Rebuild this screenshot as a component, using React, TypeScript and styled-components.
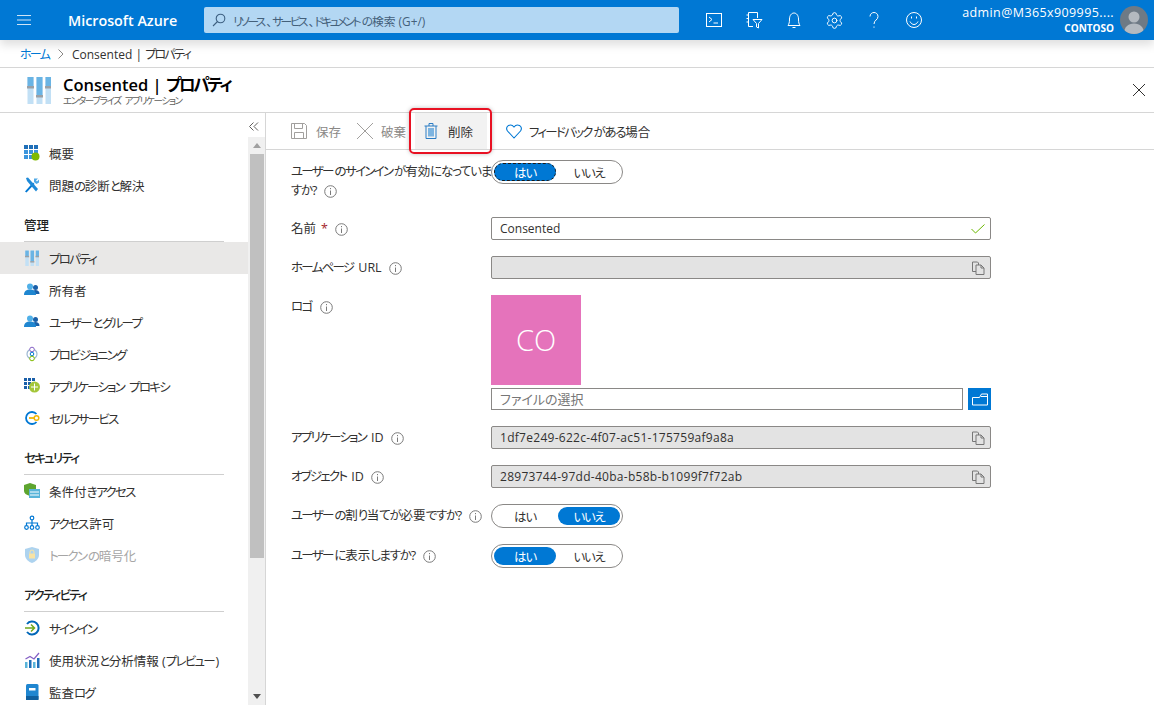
import React from "react";
import styled, { createGlobalStyle } from "styled-components";
import { Settings } from "lucide-react";

const GlobalStyle = createGlobalStyle`
  html, body {
    margin: 0;
    padding: 0;
    background: #fff;
  }
  body {
    font-family: "Open Sans", "Noto Sans CJK JP", sans-serif;
    font-feature-settings: "palt";
    font-size: 12px;
    color: #323130;
  }
  * { box-sizing: border-box; }
`;

const Page = styled.div`
  width: 1154px;
  height: 705px;
  overflow: hidden;
  display: flex;
  flex-direction: column;
`;

// the kana of the original UI font are much narrower than the kanji
const Katakana = styled.span`
  letter-spacing: -0.14em;
  margin-right: 0.14em;
`;

const Hiragana = styled.span`
  letter-spacing: -0.1em;
`;

const Ja = ({ text }: { text: string }) => (
  <>
    {text.split(/([ァ-ヶー]+|[ぁ-ん]+)/).map((part, i) => {
      if (/^[ァ-ヶー]+$/.test(part)) return <Katakana key={i}>{part}</Katakana>;
      if (/^[ぁ-ん]+$/.test(part)) return <Hiragana key={i}>{part}</Hiragana>;
      return part;
    })}
  </>
);

/* top bar */
const TopBar = styled.header`
  height: 40px;
  flex: none;
  background: #0078d4;
  display: flex;
  align-items: center;
  color: #fff;
  position: relative;
  z-index: 2;
  box-shadow: 0 5px 9px rgba(0, 0, 0, 0.13);
`;

const Burger = styled.div`
  width: 68px;
  padding-left: 17px;
  display: flex;
  align-items: center;
`;

const Brand = styled.div`
  width: 136px;
  font-size: 14.3px;
  font-weight: 600;
`;

const Search = styled.div`
  width: 475px;
  height: 26px;
  background: #b3d7f3;
  border-radius: 2px;
  display: flex;
  align-items: center;
  gap: 7px;
  padding-left: 8px;
  font-size: 11.8px;
  color: #44607a;
  white-space: pre;
  ${Katakana} {
    letter-spacing: -0.22em;
    margin-right: 0.22em;
  }
`;

const TopIcons = styled.div`
  display: flex;
  margin-left: 15px;
`;

const TopIcon = styled.div`
  width: 40px;
  height: 40px;
  display: flex;
  align-items: center;
  justify-content: center;
`;

const Account = styled.div`
  margin-left: auto;
  display: flex;
  align-items: center;
  padding-right: 6px;
  gap: 6px;
`;

const AccountText = styled.div`
  text-align: right;
  line-height: 16px;
  font-size: 12.5px;
  letter-spacing: 0.4px;
`;

const Tenant = styled.div`
  font-size: 10px;
  font-weight: 700;
  line-height: 14px;
  letter-spacing: 0;
`;

const Avatar = styled.div`
  width: 28px;
  height: 28px;
  border-radius: 50%;
  background: #6e7a85;
  overflow: hidden;
`;

/* breadcrumb and title */
const Crumbs = styled.nav`
  height: 28px;
  flex: none;
  border-bottom: 1px solid #d6d6d6;
  display: flex;
  align-items: center;
  padding: 1px 0 0 20px;
  font-size: 12px;
  white-space: pre;
`;

const CrumbLink = styled.span`
  color: #0078d4;
`;

const CrumbSep = styled.span`
  display: flex;
  width: 21px;
  justify-content: center;
`;

const TitleBar = styled.div`
  height: 45px;
  flex: none;
  border-bottom: 1px solid #d6d6d6;
  display: flex;
  align-items: center;
  padding: 0 9px 0 27px;
`;

const TitleText = styled.div`
  margin-left: 12px;
  flex: 1;
`;

const Heading = styled.h1`
  margin: 0;
  font-size: 16.5px;
  font-weight: 600;
  line-height: 21px;
  color: #000;
`;

const SubHeading = styled.div`
  font-size: 9.5px;
  line-height: 12px;
  color: #605e5c;
`;

/* body */
const Body = styled.div`
  flex: 1;
  min-height: 0;
  display: flex;
`;

const Nav = styled.aside`
  width: 248px;
  flex: none;
  padding-top: 24px;
  overflow: hidden;
`;

const NavItem = styled.div<{ $active?: boolean; $disabled?: boolean }>`
  height: 32px;
  display: flex;
  align-items: center;
  gap: 9px;
  padding-left: 24px;
  font-size: 12.5px;
  background: ${(p) => (p.$active ? "#e9e8e7" : "transparent")};
  color: ${(p) => (p.$disabled ? "#a6a6a6" : "#323130")};
  svg {
    opacity: ${(p) => (p.$disabled ? 0.5 : 1)};
  }
`;

const NavIcon = styled.span`
  width: 16px;
  flex: none;
  display: flex;
  justify-content: center;
`;

const NavSection = styled.div`
  height: 41px;
  margin: 0 24px;
  border-bottom: 1px solid #cfcfcf;
  padding-top: 16px;
  line-height: 18px;
  font-size: 12.5px;
  font-weight: 500;
  color: #201f1e;
`;

const ScrollColumn = styled.div`
  width: 18px;
  flex: none;
  border-right: 1px solid #d6d6d6;
  display: flex;
  flex-direction: column;
`;

const Collapse = styled.div`
  height: 24px;
  display: flex;
  align-items: center;
  padding: 2px 0 0 1px;
  flex: none;
`;

const Track = styled.div`
  flex: 1;
  background: #f0f0f0;
  display: flex;
  flex-direction: column;
  align-items: center;
  position: relative;
`;

const ScrollArrow = styled.div`
  height: 17px;
  flex: none;
  display: flex;
  align-items: center;
  justify-content: center;
`;

const Thumb = styled.div`
  width: 14px;
  height: 404px;
  background: #c0c0c0;
  margin-left: 1px;
`;

const TrackFill = styled.div`
  flex: 1;
`;

const Main = styled.main`
  flex: 1;
  min-width: 0;
`;

const Toolbar = styled.div`
  height: 37px;
  border-bottom: 1px solid #d6d6d6;
  display: flex;
  align-items: center;
  padding-left: 25px;
  font-size: 12.5px;
`;

const ToolButton = styled.div<{ $disabled?: boolean; $width: number; $gap: number }>`
  display: flex;
  align-items: center;
  width: ${(p) => p.$width}px;
  gap: ${(p) => p.$gap}px;
  white-space: nowrap;
  color: ${(p) => (p.$disabled ? "#8a8886" : "#323130")};
`;

const DeleteButton = styled.div`
  position: relative;
  width: 72px;
  height: 36px;
  margin-left: 8px;
  margin-right: 19px;
  background: #f2f2f2;
  display: flex;
  align-items: center;
  gap: 10px;
  padding-left: 9px;
`;

const Callout = styled.div`
  position: absolute;
  left: -6px;
  top: -5px;
  width: 83px;
  height: 46px;
  border: 2px solid #e81123;
  border-radius: 5px;
  box-shadow: 0 0 4px rgba(0, 0, 0, 0.25);
`;

const Form = styled.div`
  width: 726px;
  padding: 10px 0 0 25px;
  display: grid;
  grid-template-columns: 200px 500px;
  row-gap: 16px;
`;

const Label = styled.div<{ $tall?: boolean }>`
  font-size: 12.5px;
  line-height: ${(p) => (p.$tall ? "19px" : "23px")};
  height: ${(p) => (p.$tall ? "41px" : "23px")};
  padding-top: ${(p) => (p.$tall ? "2px" : "0")};
  color: #323130;
  white-space: nowrap;
`;

const Required = styled.span`
  color: #a4262c;
  margin-left: 5px;
`;

const Info = styled.svg`
  width: 13px;
  height: 13px;
  vertical-align: -2.5px;
  margin-left: 7px;
`;

const Field = styled.div<{ $readOnly?: boolean }>`
  height: 23px;
  border: 1px solid #8a8886;
  border-radius: 2px;
  background: ${(p) => (p.$readOnly ? "#e3e3e3" : "#fff")};
  display: flex;
  align-items: center;
  justify-content: space-between;
  padding: 0 5px 0 8px;
  font-size: 12px;
  color: #323130;
`;

const IdText = styled.span`
  letter-spacing: 0.28px;
`;

const LogoBlock = styled.div`
  display: flex;
  flex-direction: column;
  gap: 3px;
`;

const LogoTile = styled.div`
  width: 90px;
  height: 90px;
  background: #e573bb;
  color: #fff;
  font-size: 29px;
  font-weight: 300;
  padding-bottom: 2px;
  display: flex;
  align-items: center;
  justify-content: center;
`;

const FileRow = styled.div`
  display: flex;
  justify-content: space-between;
`;

const FileInput = styled.div`
  width: 472px;
  height: 22px;
  border: 1px solid #8a8886;
  display: flex;
  align-items: center;
  padding: 0 0 1px 8px;
  font-size: 13px;
  color: #767676;
`;

const FileButton = styled.div`
  width: 23px;
  height: 22px;
  background: #0078d4;
  display: flex;
  align-items: center;
  justify-content: center;
`;

const Toggle = styled.div`
  width: 132px;
  height: 24px;
  border: 1px solid #8a8886;
  border-radius: 12px;
  padding: 2px;
  display: flex;
  gap: 2px;
`;

const ToggleOption = styled.div<{ $on?: boolean; $focus?: boolean }>`
  width: 63px;
  border-radius: 9px;
  display: flex;
  align-items: center;
  justify-content: center;
  font-size: 12.5px;
  background: ${(p) => (p.$on ? "#0078d4" : "transparent")};
  color: ${(p) => (p.$on ? "#fff" : "#323130")};
  outline: ${(p) => (p.$focus ? "1px dashed #1a1a1a" : "none")};
  outline-offset: -1px;
`;

/* icons */
const Stroke = ({ children, size = 20, color = "#fff" }: { children: React.ReactNode; size?: number; color?: string }) => (
  <svg width={size} height={size} viewBox="0 0 20 20" fill="none" stroke={color} strokeWidth="1">
    {children}
  </svg>
);

const Sliders = ({ size }: { size: number }) => (
  <svg width={size} height={(size * 28) / 24} viewBox="0 0 24 28">
    {[0, 9, 18].map((x, i) => (
      <g key={x}>
        <rect x={x + 0.5} y="1" width="6" height="27" fill="#c2e0f5" />
        <rect x={x + 0.5} y="1" width="6" height={[10, 18, 10][i]} fill="#6ab4e4" />
        <rect x={x} y={[10, 19, 10][i]} width="7" height="2.5" fill="#9aa0a6" />
      </g>
    ))}
  </svg>
);

const IconOverview = () => (
  <svg width="16" height="16" viewBox="0 0 16 16">
    {[0, 5, 10].map((y) =>
      [0, 5, 10].map((x) => <rect key={`${x}${y}`} x={x} y={y} width="4" height="4" fill={y === 0 ? "#1f6fb8" : "#3b95dc"} />)
    )}
    <circle cx="11.5" cy="11.5" r="4" fill="#7fba00" />
  </svg>
);

const IconTools = () => (
  <svg width="16" height="16" viewBox="0 0 16 16">
    <path d="M1 14.5 9 5.5l1.5 1.5-8 8.5z" fill="#0078d4" />
    <path d="M10 1.5l4 0-2 2 1 1 2-2v3l-2.5 1.5L10 5z" fill="#50a9e6" />
    <path d="M2 1l2-.5 10 11.5-2 2.5L3 4z" fill="#1f8ad8" />
  </svg>
);

const IconUsers = () => (
  <svg width="16" height="16" viewBox="0 0 16 16">
    <circle cx="11.5" cy="5.5" r="2.5" fill="#1a5fa8" />
    <path d="M8 12c0-3 1.5-4 3.5-4s4 1 4 4z" fill="#1a5fa8" />
    <circle cx="6" cy="4.5" r="3" fill="#50b0e8" />
    <path d="M0 13c0-4 2.500-5.500 6-5.500s6 1.500 6 5.500z" fill="#1f86d0" />
  </svg>
);

const IconProvision = () => (
  <svg width="16" height="16" viewBox="0 0 16 16" fill="none">
    <circle cx="8" cy="8" r="5" stroke="#9cb7d1" strokeWidth="1.2" />
    <circle cx="8" cy="3.500" r="2.300" fill="#fff" stroke="#8661c5" />
    <circle cx="8" cy="8" r="1.800" fill="#fff" stroke="#0078d4" />
    <circle cx="8" cy="12.500" r="2.300" fill="#fff" stroke="#7fba00" />
  </svg>
);

const IconProxy = () => (
  <svg width="16" height="16" viewBox="0 0 16 16">
    {[0, 4, 8].map((y) =>
      [0, 4, 8].map((x) => <rect key={`${x}${y}`} x={x} y={y} width="3" height="3" fill="#1a5fa8" />)
    )}
    <circle cx="10.500" cy="9" r="5.500" fill="#a4c639" />
    <path d="M7 9h7M10.500 5.500v7" stroke="#fff" strokeWidth="1" />
  </svg>
);

const IconSelfService = () => (
  <svg width="16" height="16" viewBox="0 0 16 16" fill="none">
    <path d="M12.500 4A6 6 0 1 0 12.500 12" stroke="#0078d4" strokeWidth="1.800" />
    <path d="M5 8h6" stroke="#f2b705" strokeWidth="1.800" />
    <circle cx="12.500" cy="8" r="2.300" stroke="#f2b705" strokeWidth="1.500" fill="#fff" />
  </svg>
);

const IconConditional = () => (
  <svg width="16" height="16" viewBox="0 0 16 16">
    <path d="M6 0l6 2v6c0 2-3 4-6 5-4-1-6-3-6-5V2z" fill="#5ea52f" />
    <rect x="5" y="6" width="11" height="9" fill="#59b4d9" />
    <path d="M6 9h9M6 12h9" stroke="#fff" strokeWidth="1" />
  </svg>
);

const IconPermissions = () => (
  <svg width="16" height="16" viewBox="0 0 16 16" fill="none" stroke="#0078d4" strokeWidth="1.200">
    <circle cx="8" cy="3" r="1.800" />
    <circle cx="2.500" cy="12.500" r="1.800" />
    <circle cx="8" cy="12.500" r="1.800" />
    <circle cx="13.500" cy="12.500" r="1.800" />
    <path d="M8 5v6M2.500 10.500V8h11v2.500" />
  </svg>
);

const IconToken = () => (
  <svg width="16" height="16" viewBox="0 0 16 16">
    <path d="M8 0l7 2v6c0 4-4 7-7 8-3-1-7-4-7-8V2z" fill="#5ea8e0" />
    <rect x="5" y="6.500" width="6" height="5" fill="#f2c94c" />
    <path d="M6 6.500V5a2 2 0 0 1 4 0v1.500" fill="none" stroke="#f2c94c" />
  </svg>
);

const IconSignIn = () => (
  <svg width="16" height="16" viewBox="0 0 16 16" fill="none">
    <path d="M3 4a6.500 6.500 0 1 1 0 8" stroke="#0067b8" strokeWidth="2" />
    <path d="M1 8h9M7 4.500 10.500 8 7 11.500" stroke="#6fa81e" strokeWidth="1.500" />
  </svg>
);

const IconUsage = () => (
  <svg width="16" height="16" viewBox="0 0 16 16">
    <rect x="1" y="10" width="2.500" height="6" fill="#59b4d9" />
    <rect x="5" y="8" width="2.500" height="8" fill="#1f6fb8" />
    <rect x="9" y="10" width="2.500" height="6" fill="#59b4d9" />
    <rect x="13" y="6" width="2.500" height="10" fill="#1f6fb8" />
    <path d="M1.500 7 6 4.500l4 2.500 5-6" fill="none" stroke="#8661c5" strokeWidth="1.300" />
  </svg>
);

const IconAudit = () => (
  <svg width="16" height="16" viewBox="0 0 16 16">
    <rect x="2" y="0" width="12.500" height="16" rx="1.500" fill="#1f86d0" />
    <rect x="2" y="12" width="12.500" height="4" fill="#0f5f9e" />
    <rect x="5" y="4" width="6.500" height="2.500" fill="#fff" />
  </svg>
);

const InfoIcon = () => (
  <Info viewBox="0 0 13 13" fill="none">
    <circle cx="6.500" cy="6.500" r="5.800" stroke="#7a7a7a" />
    <path d="M6.500 5.500V10" stroke="#7a7a7a" />
    <path d="M6.500 3v1.200" stroke="#7a7a7a" />
  </Info>
);

const CopyIcon = () => (
  <svg width="13" height="14" viewBox="0 0 13 14" fill="none" stroke="#777" strokeWidth="1">
    <path d="M.5 1h5l1 1v8.500h-6z" fill="#e3e3e3" />
    <path d="M4 4h5l3 3v6.500H4z" fill="#e3e3e3" />
    <path d="M9 4v3h3" />
  </svg>
);

const sections = [
  {
    title: null,
    items: [
      { icon: <IconOverview />, text: "概要" },
      { icon: <IconTools />, text: "問題の診断と解決" },
    ],
  },
  {
    title: "管理",
    items: [
      { icon: <Sliders size={14} />, text: "プロパティ", active: true },
      { icon: <IconUsers />, text: "所有者" },
      { icon: <IconUsers />, text: "ユーザーとグループ" },
      { icon: <IconProvision />, text: "プロビジョニング" },
      { icon: <IconProxy />, text: "アプリケーション プロキシ" },
      { icon: <IconSelfService />, text: "セルフサービス" },
    ],
  },
  {
    title: "セキュリティ",
    items: [
      { icon: <IconConditional />, text: "条件付きアクセス" },
      { icon: <IconPermissions />, text: "アクセス許可" },
      { icon: <IconToken />, text: "トークンの暗号化", disabled: true },
    ],
  },
  {
    title: "アクティビティ",
    items: [
      { icon: <IconSignIn />, text: "サインイン" },
      { icon: <IconUsage />, text: "使用状況と分析情報 (プレビュー)" },
      { icon: <IconAudit />, text: "監査ログ" },
    ],
  },
];

const App: React.FC = () => {
  return (
    <Page>
      <GlobalStyle />
      <TopBar>
        <Burger>
          <svg width="14" height="12" viewBox="0 0 14 12" stroke="#cfe4f6" strokeWidth="1.200">
            <path d="M0 1.500h14M0 6h14M0 10.500h14" />
          </svg>
        </Burger>
        <Brand>Microsoft Azure</Brand>
        <Search>
          <svg width="14" height="14" viewBox="0 0 14 14" fill="none" stroke="#3d5f80" strokeWidth="1.100">
            <circle cx="8.500" cy="5.500" r="4.300" />
            <path d="M5.500 8.500 1 13" />
          </svg>
          <span>
            <Ja text="リソース、サービス、ドキュメントの検索 (G+/)" />
          </span>
        </Search>
        <TopIcons>
          <TopIcon>
            <Stroke>
              <rect x="2.500" y="3.500" width="15" height="13" />
              <path d="M5 7l3 2.500L5 12M9.500 13H14" />
            </Stroke>
          </TopIcon>
          <TopIcon>
            <Stroke>
              <path d="M4.500 2.500h9V8M9 16.500H4.500v-14M2.500 5h2M2.500 8.500h2M2.500 12h2" />
              <path d="M9 9.500h9l-3.500 4v4.500l-2-1v-3.500z" />
            </Stroke>
          </TopIcon>
          <TopIcon>
            <Stroke>
              <path d="M4 15.500c1-1.500 1.500-3 1.500-6.500C5.500 5.500 7.500 3 10 3s4.500 2.500 4.500 6 .5 5 1.500 6.500z" />
              <path d="M8.500 17.500h3" />
            </Stroke>
          </TopIcon>
          <TopIcon>
            <Settings size={19} color="#fff" strokeWidth={1.2} />
          </TopIcon>
          <TopIcon>
            <Stroke>
              <path d="M6 6.500C6 4 8 2.500 10 2.500s4 1.500 4 4c0 3.500-4 3.500-4 7.500" />
              <path d="M10 16.500v1.200" />
            </Stroke>
          </TopIcon>
          <TopIcon>
            <Stroke>
              <circle cx="10" cy="10" r="7.500" />
              <path d="M6 11.500c1 2 2.500 3 4 3s3-1 4-3" />
              <path d="M7.500 6.500v2M12.500 6.500v2" />
            </Stroke>
          </TopIcon>
        </TopIcons>
        <Account>
          <AccountText>
            admin@M365x909995....
            <Tenant>CONTOSO</Tenant>
          </AccountText>
          <Avatar>
            <svg width="28" height="28" viewBox="0 0 28 28">
              <circle cx="14" cy="11" r="5.500" fill="#b4bac0" />
              <path d="M4 28c0-7 4-10.500 10-10.500S24 21 24 28z" fill="#b4bac0" />
            </svg>
          </Avatar>
        </Account>
      </TopBar>

      <Crumbs>
        <CrumbLink>
          <Ja text="ホーム" />
        </CrumbLink>
        <CrumbSep>
          <svg width="6" height="10" viewBox="0 0 6 10" fill="none" stroke="#8a8886">
            <path d="M.5.500 5 5 .5 9.500" />
          </svg>
        </CrumbSep>
        <span>
          <Ja text="Consented | プロパティ" />
        </span>
      </Crumbs>

      <TitleBar>
        <Sliders size={24} />
        <TitleText>
          <Heading>
            <Ja text="Consented | プロパティ" />
          </Heading>
          <SubHeading>
            <Ja text="エンタープライズ アプリケーション" />
          </SubHeading>
        </TitleText>
        <svg width="12" height="12" viewBox="0 0 12 12" stroke="#323130" strokeWidth="1">
          <path d="M0 0l12 12M12 0 0 12" />
        </svg>
      </TitleBar>

      <Body>
        <Nav>
          {sections.map((section) => (
            <div key={section.title ?? "top"}>
              {section.title && (
                <NavSection>
                  <Ja text={section.title} />
                </NavSection>
              )}
              {section.items.map((item) => (
                <NavItem key={item.text} $active={item.active} $disabled={item.disabled}>
                  <NavIcon>{item.icon}</NavIcon>
                  <span>
                    <Ja text={item.text} />
                  </span>
                </NavItem>
              ))}
            </div>
          ))}
        </Nav>

        <ScrollColumn>
          <Collapse>
            <svg width="10" height="9" viewBox="0 0 10 9" fill="none" stroke="#605e5c">
              <path d="M4.500.500.500 4.500l4 4M9 .500l-4 4 4 4" />
            </svg>
          </Collapse>
          <Track>
            <ScrollArrow>
              <svg width="8" height="5" viewBox="0 0 8 5">
                <path d="M4 0l4 5H0z" fill="#a0a0a0" />
              </svg>
            </ScrollArrow>
            <Thumb />
            <TrackFill />
            <ScrollArrow>
              <svg width="8" height="5" viewBox="0 0 8 5">
                <path d="M4 5 8 0H0z" fill="#505050" />
              </svg>
            </ScrollArrow>
          </Track>
        </ScrollColumn>

        <Main>
          <Toolbar>
            <ToolButton $disabled $width={65} $gap={9}>
              <svg width="16" height="16" viewBox="0 0 16 16" fill="none" stroke="#a19f9d">
                <path d="M.5.500h13l2 2v13H.5z" />
                <path d="M3.500.500v5h8v-5M3.500 15.500v-6h9v6" />
              </svg>
              保存
            </ToolButton>
            <ToolButton $disabled $width={51} $gap={7}>
              <svg width="18" height="18" viewBox="0 0 18 18" stroke="#a19f9d" strokeWidth="1">
                <path d="M1 1l16 16M17 1 1 17" />
              </svg>
              破棄
            </ToolButton>
            <DeleteButton>
              <svg width="14" height="16" viewBox="0 0 14 16" fill="none" stroke="#2b7cc4">
                <path d="M.5 3h13M5 3V.500h4V3M2 3v12.500h10V3" />
                <rect x="4" y="5" width="6" height="8.500" fill="#7db4e0" stroke="none" />
              </svg>
              削除
              <Callout />
            </DeleteButton>
            <ToolButton $width={150} $gap={7}>
              <svg width="16" height="15" viewBox="0 0 16 15" fill="none" stroke="#0078d4" strokeWidth="1.100">
                <path d="M8 14 1.500 7C0 5 .5 2.500 2.500 1.500S6.500 1 8 3c1.500-2 3.500-2.500 5.500-1.500S16 5 14.500 7z" />
              </svg>
              <span>
                <Ja text="フィードバックがある場合" />
              </span>
            </ToolButton>
          </Toolbar>

          <Form>
            <Label $tall>
              <Ja text="ユーザーのサインインが有効になっていま" />
              <br />
              <Ja text="すか?" />
              <InfoIcon />
            </Label>
            <Toggle>
              <ToggleOption $on $focus>
                <Ja text="はい" />
              </ToggleOption>
              <ToggleOption>
                <Ja text="いいえ" />
              </ToggleOption>
            </Toggle>

            <Label>
              名前<Required>*</Required>
              <InfoIcon />
            </Label>
            <Field>
              Consented
              <svg width="14" height="10" viewBox="0 0 14 10" fill="none" stroke="#6bb700" strokeWidth="1">
                <path d="M.5 5 4.500 9 13.500.500" />
              </svg>
            </Field>

            <Label>
              <Ja text="ホームページ URL" />
              <InfoIcon />
            </Label>
            <Field $readOnly>
              <span />
              <CopyIcon />
            </Field>

            <Label>
              <Ja text="ロゴ" />
              <InfoIcon />
            </Label>
            <LogoBlock>
              <LogoTile>CO</LogoTile>
              <FileRow>
                <FileInput>ファイルの選択</FileInput>
                <FileButton>
                  <svg width="16" height="13" viewBox="0 0 16 13" fill="none" stroke="#fff">
                    <path d="M.5 4.500h7l2-3.500h6v11H.5z" />
                    <path d="M9 3.500h6.500" />
                  </svg>
                </FileButton>
              </FileRow>
            </LogoBlock>

            <Label>
              <Ja text="アプリケーション ID" />
              <InfoIcon />
            </Label>
            <Field $readOnly>
              <IdText>1df7e249-622c-4f07-ac51-175759af9a8a</IdText>
              <CopyIcon />
            </Field>

            <Label>
              <Ja text="オブジェクト ID" />
              <InfoIcon />
            </Label>
            <Field $readOnly>
              <IdText>28973744-97dd-40ba-b58b-b1099f7f72ab</IdText>
              <CopyIcon />
            </Field>

            <Label>
              <Ja text="ユーザーの割り当てが必要ですか?" />
              <InfoIcon />
            </Label>
            <Toggle>
              <ToggleOption>
                <Ja text="はい" />
              </ToggleOption>
              <ToggleOption $on>
                <Ja text="いいえ" />
              </ToggleOption>
            </Toggle>

            <Label>
              <Ja text="ユーザーに表示しますか?" />
              <InfoIcon />
            </Label>
            <Toggle>
              <ToggleOption $on>
                <Ja text="はい" />
              </ToggleOption>
              <ToggleOption>
                <Ja text="いいえ" />
              </ToggleOption>
            </Toggle>
          </Form>
        </Main>
      </Body>
    </Page>
  );
};

export default App;
